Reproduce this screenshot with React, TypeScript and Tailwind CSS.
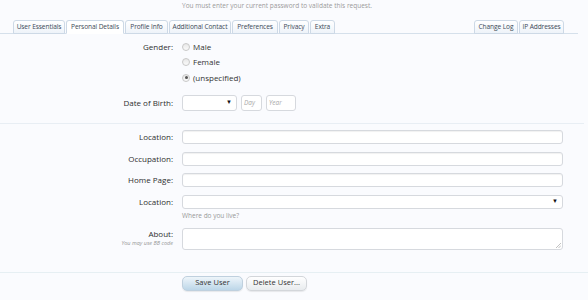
const leftTabs = [
  { label: "User Essentials", w: "w-[52px]" },
  { label: "Personal Details", w: "w-[58px]", active: true },
  { label: "Profile Info", w: "w-[43px]" },
  { label: "Additional Contact", w: "w-[62px]" },
  { label: "Preferences", w: "w-[46px]" },
  { label: "Privacy", w: "w-[30px]" },
  { label: "Extra", w: "w-[25px]" },
];

const rightTabs = [
  { label: "Change Log", w: "w-[44px]" },
  { label: "IP Addresses", w: "w-[45px]" },
];

function Tab({ label, w, active }: { label: string; w: string; active?: boolean }) {
  return (
    <div
      className={
        "h-[14px] -mb-px flex items-center justify-center whitespace-nowrap rounded-t-[3px] border border-[#cdd9e6] text-[6.6px] tracking-[-0.1px] text-[#3d4a57] " +
        w +
        (active
          ? " bg-white border-b-white"
          : " bg-gradient-to-b from-white to-[#eef3f9]")
      }
    >
      {label}
    </div>
  );
}

function Radio({ label, checked }: { label: string; checked?: boolean }) {
  return (
    <label className="h-[15.5px] flex items-center gap-[3px] text-[8px] text-[#333]">
      <span className="w-[8px] h-[8px] rounded-full border border-[#c8c8c8] bg-gradient-to-b from-[#e8e8e8] to-[#fafafa] flex items-center justify-center">
        {checked && <span className="w-[3px] h-[3px] rounded-full bg-[#555]" />}
      </span>
      {label}
    </label>
  );
}

function TextInput({ className = "" }: { className?: string }) {
  return (
    <div
      className={
        "h-[14px] rounded-[3px] border border-[#d6d9de] bg-white shadow-[inset_0_1px_1px_rgba(0,0,0,0.06)] " +
        className
      }
    />
  );
}

function Row({ label, children, className = "" }: { label: string; children: React.ReactNode; className?: string }) {
  return (
    <div className={"flex items-center " + className}>
      <div className="w-[173px] text-right text-[8px] text-[#2e2e2e]">{label}</div>
      <div className="ml-[9px] w-[381px]">{children}</div>
    </div>
  );
}

export default function App() {
  return (
    <div className="w-[588px] h-[300px] overflow-hidden bg-[#fafbfe] font-['Open_Sans',sans-serif]">
      {/* notice */}
      <div className="h-[20px] pl-[182px] pt-[1px] text-[6.5px] text-[#9a9a9a]">
        You must enter your current password to validate this request.
      </div>

      {/* tabs */}
      <div className="h-[14px] mr-[10px] flex items-end gap-px pl-[13px] pr-[14px] border-b border-[#d5e0eb]">
        {leftTabs.map((t) => (
          <Tab key={t.label} {...t} />
        ))}
        <div className="flex-1" />
        {rightTabs.map((t) => (
          <Tab key={t.label} {...t} />
        ))}
      </div>

      {/* gender */}
      <div className="flex mt-[5px]">
        <div className="w-[173px] h-[15px] flex items-center justify-end text-[8px] text-[#2e2e2e]">Gender:</div>
        <div className="ml-[9px] flex flex-col">
          <Radio label="Male" />
          <Radio label="Female" />
          <Radio label="(unspecified)" checked />
        </div>
      </div>

      {/* date of birth */}
      <Row label="Date of Birth:" className="mt-[9px]">
        <div className="flex gap-[4px]">
          <div className="h-[16px] w-[55px] rounded-[3px] border border-[#d6d9de] bg-white flex items-center justify-end pr-[4px] text-[6px] text-[#111]">
            ▼
          </div>
          <div className="h-[16px] w-[21px] rounded-[3px] border border-[#d6d9de] bg-white pl-[2px] flex items-center text-[6.5px] italic text-[#aaa]">
            Day
          </div>
          <div className="h-[16px] w-[30px] rounded-[3px] border border-[#d6d9de] bg-white pl-[2px] flex items-center text-[6.5px] italic text-[#aaa]">
            Year
          </div>
        </div>
      </Row>

      <div className="mt-[12px] mr-[4px] h-[1px] bg-[#e8eef4]" />

      <Row label="Location:" className="mt-[6px]">
        <TextInput />
      </Row>
      <Row label="Occupation:" className="mt-[8px]">
        <TextInput />
      </Row>
      <Row label="Home Page:" className="mt-[7px]">
        <TextInput />
      </Row>
      <Row label="Location:" className="mt-[8px]">
        <div className="h-[14px] rounded-[3px] border border-[#d6d9de] bg-white flex items-center justify-end pr-[4px] text-[6px] text-[#111]">
          ▼
        </div>
      </Row>
      <div className="pl-[182px] mt-[2px] h-[10px] text-[6.5px] text-[#999]">Where do you live?</div>

      {/* about */}
      <div className="flex mt-[7px]">
        <div className="w-[173px] text-right">
          <div className="text-[8px] leading-[10px] mt-[1px] text-[#2e2e2e]">About:</div>
          <div className="text-[5.5px] italic leading-[8px] text-[#999]">You may use BB code</div>
        </div>
        <div className="ml-[9px] w-[381px] h-[22px] rounded-[3px] border border-[#d6d9de] bg-white relative">
          <svg className="absolute right-[1px] bottom-[1px]" width="5" height="5" viewBox="0 0 5 5">
            <path d="M5 0L0 5M5 2.5L2.5 5" stroke="#999" strokeWidth="0.6" />
          </svg>
        </div>
      </div>

      <div className="mt-[22px] h-[1px] bg-[#e6eff3]" />

      {/* buttons */}
      <div className="pl-[182px] mt-[3px] flex gap-[3px]">
        <button className="h-[15px] w-[61px] rounded-[5px] border border-[#bfd0de] bg-gradient-to-b from-[#eef5fa] to-[#bcd6e8] text-[7.5px] text-[#333] shadow-[0_1px_1px_rgba(0,0,0,0.08)]">
          Save User
        </button>
        <button className="h-[15px] w-[61px] rounded-[5px] border border-[#d3d6da] bg-gradient-to-b from-white to-[#e8ebee] text-[7.5px] text-[#333] shadow-[0_1px_1px_rgba(0,0,0,0.08)]">
          Delete User...
        </button>
      </div>
    </div>
  );
}
